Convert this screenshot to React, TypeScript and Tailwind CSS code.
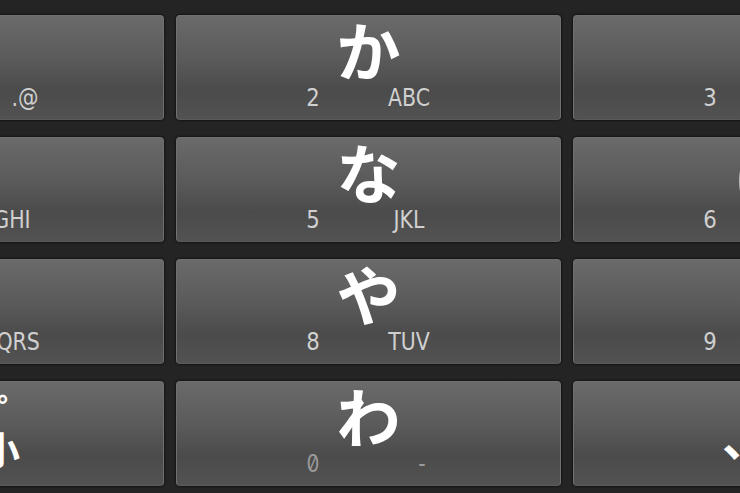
// 12-key kana flick keyboard, cropped: middle column fully visible,
// left and right columns run past the window edges.

type KeyDef = {
  kana?: string;
  num?: string;
  letters?: string;
  shift?: boolean;
  dim?: boolean;
  custom?: "dakuten" | "punct";
};

const ROWS: KeyDef[][] = [
  [
    { kana: "あ", num: "1", letters: ".@", shift: true },
    { kana: "か", num: "2", letters: "ABC" },
    { kana: "さ", num: "3", letters: "DEF" },
  ],
  [
    { kana: "た", num: "4", letters: "GHI" },
    { kana: "な", num: "5", letters: "JKL" },
    { kana: "は", num: "6", letters: "MNO" },
  ],
  [
    { kana: "ま", num: "7", letters: "PQRS" },
    { kana: "や", num: "8", letters: "TUV" },
    { kana: "ら", num: "9", letters: "WXYZ" },
  ],
  [
    { custom: "dakuten" },
    { kana: "わ", num: "0", letters: "-", dim: true, shift: true },
    { custom: "punct" },
  ],
];

const kanaFont = "font-['Noto_Sans_CJK_JP',sans-serif]";
const labelFont = "font-['DejaVu_Sans',sans-serif]";

export default function App() {
  return (
    <div className="w-[740px] h-[493px] overflow-hidden bg-[#242424] flex flex-col gap-[17px] pt-[15px]">
      {ROWS.map((row, r) => (
        <div key={r} className="flex gap-[12px] -ml-[221px]">
          {row.map((k, i) => (
            <Key key={i} k={k} />
          ))}
        </div>
      ))}
    </div>
  );
}

function Key({ k }: { k: KeyDef }) {
  return (
    <div className="w-[385px] h-[105px] shrink-0 rounded-[4px] border border-[#707070] border-b-[#5a5a5a] bg-[linear-gradient(to_bottom,#6a6a6a_0%,#5b5b5b_40%,#4b4b4b_72%,#525252_100%)] shadow-[0_0_2px_1px_rgba(0,0,0,0.45)] overflow-hidden flex flex-col">
      {k.custom === "dakuten" && (
        <div className={`${kanaFont} font-bold text-white text-right text-[38px] leading-[38px] pt-[9px]`}>
          <div className="w-[255px]">゛゜</div>
          <div className="w-[240px]">大⇔小</div>
        </div>
      )}
      {k.custom === "punct" && (
        <div className={`${kanaFont} font-bold text-white text-[48px] leading-[48px] pl-[148px] pt-[29px] whitespace-nowrap`}>
          、。?!
        </div>
      )}
      {k.kana && (
        <>
          <div className={`${kanaFont} font-bold text-white text-[64px] leading-[64px] h-[64px] text-center`}>
            {k.kana}
          </div>
          <div className={`${labelFont} flex mt-[5px] text-[25px] leading-[25px] ${k.dim ? "text-[#9a9a9a]" : "text-[#d0d0d0]"}`}>
            <span className={`ml-[106px] w-[60px] text-center scale-x-[0.85] ${k.dim ? "font-['Inter',sans-serif] slashed-zero text-[24px]" : ""}`}>
              {k.num}
            </span>
            <span className={`${k.shift ? "ml-[19px]" : "ml-[6px]"} w-[120px] text-center scale-x-[0.82] whitespace-nowrap`}>
              {k.letters}
            </span>
          </div>
        </>
      )}
    </div>
  );
}
